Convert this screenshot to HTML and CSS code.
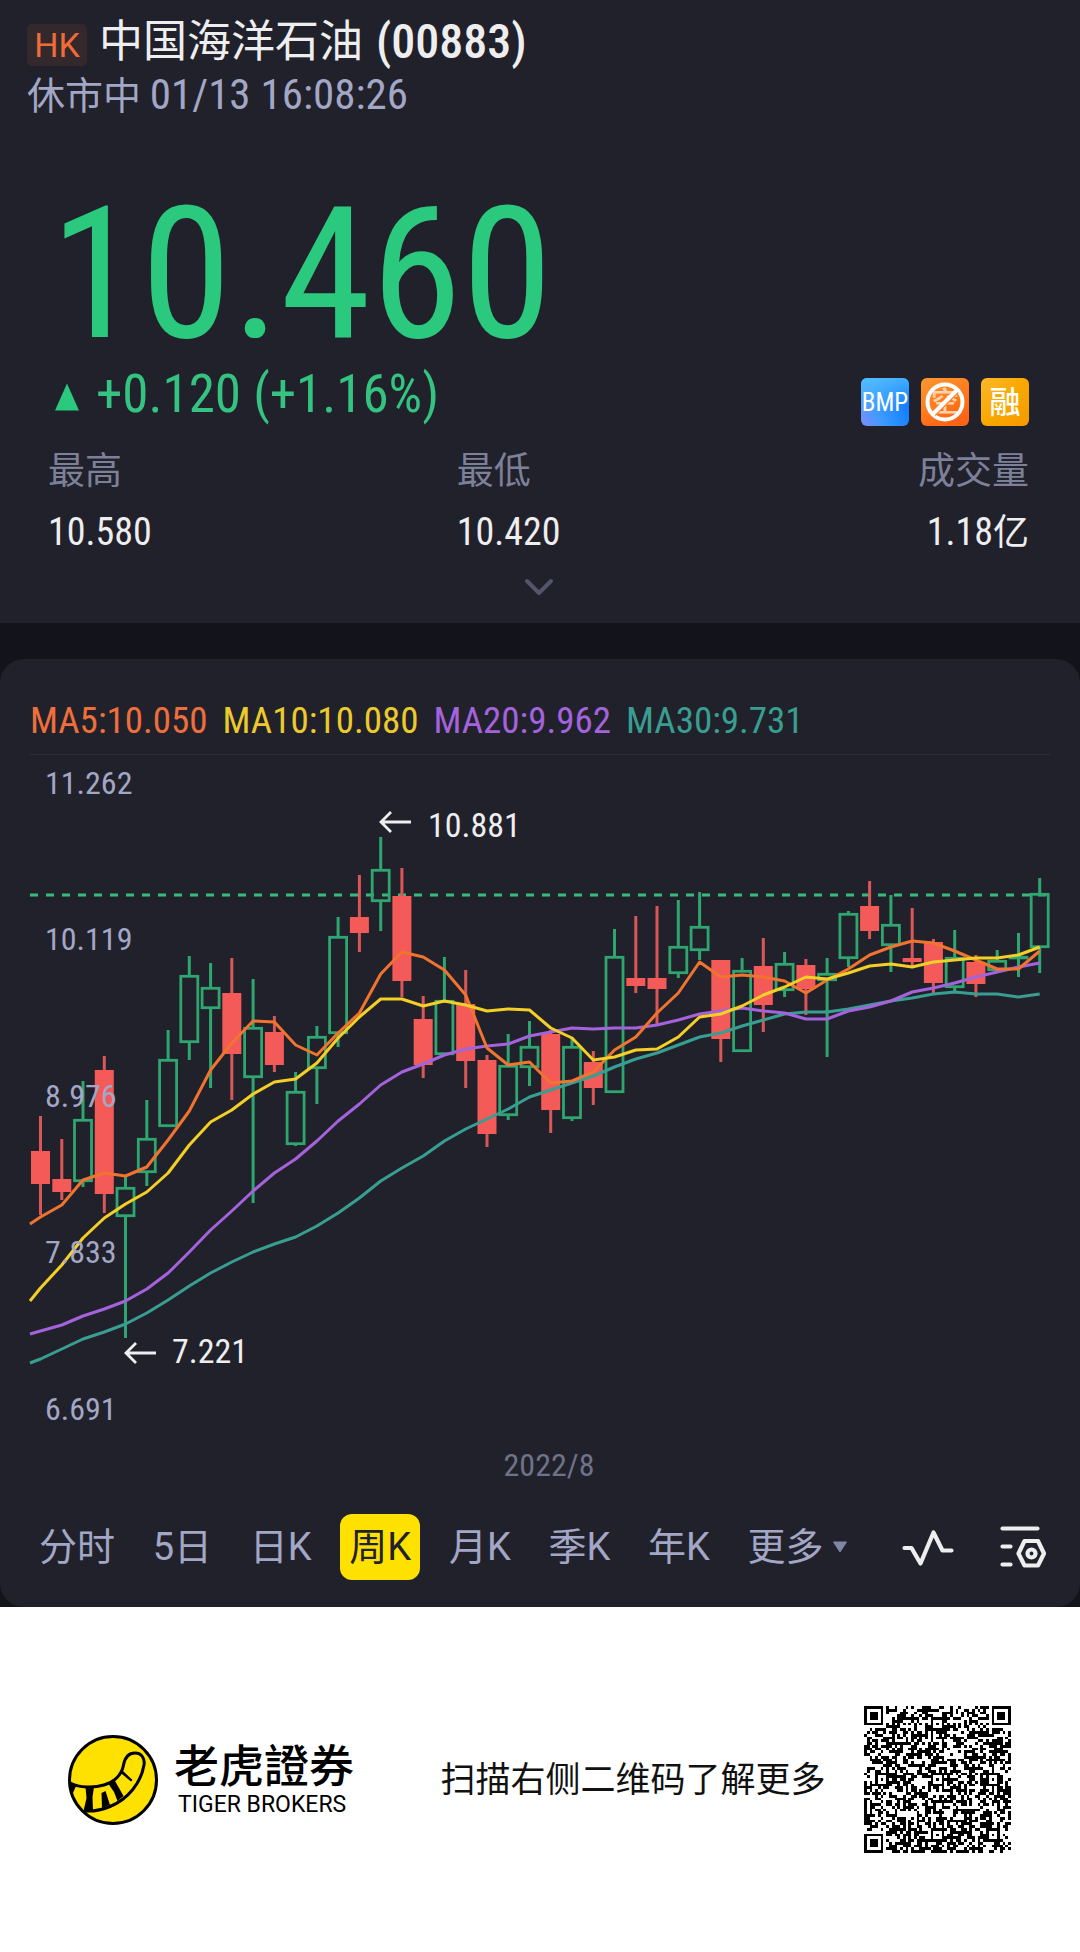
FILE: index.html
```html
<!DOCTYPE html>
<html lang="zh-CN">
<head>
<meta charset="utf-8">
<meta name="viewport" content="width=device-width, initial-scale=1">
<title>中国海洋石油 (00883)</title>
<link rel="stylesheet" href="styles.css">
</head>
<body>
<main class="app">
  <section class="quote">
    <header class="head">
      <h1 class="title"><span class="market">HK</span><span class="name">中国海洋石油</span><span class="code">(00883)</span></h1>
      <p class="status">休市中 <span class="num">01/13 16:08:26</span></p>
    </header>
    <div class="price">10.460</div>
    <div class="change-row">
      <div class="change">
        <svg class="up" viewBox="0 0 26 28" aria-hidden="true"><path d="M13 0.5 25 27.500H1Z" fill="#2ac97e"/></svg>
        <span>+0.120 (+1.16%)</span>
      </div>
      <ul class="badges">
        <li>
          <svg viewBox="0 0 48 48">
            <defs>
              <linearGradient id="blue" x1="0" y1="1" x2="1" y2="0.600"><stop offset="0" stop-color="#7d8dfa"/><stop offset="0.400" stop-color="#3f9bff"/><stop offset="1" stop-color="#0f7dff"/></linearGradient>
              <linearGradient id="sky" x1="0.300" y1="0" x2="0.500" y2="1"><stop offset="0" stop-color="#4fbaff"/><stop offset="0.700" stop-color="#4fbaff" stop-opacity="0"/></linearGradient>
            </defs>
            <rect width="48" height="48" rx="6" fill="url(#blue)"/>
            <rect width="48" height="48" rx="6" fill="url(#sky)"/>
            <text class="bmp" x="24" y="33" text-anchor="middle">BMP</text>
          </svg>
        </li>
        <li>
          <svg viewBox="0 0 48 48">
            <defs><linearGradient id="orange" x1="0" y1="0" x2="0.500" y2="1"><stop offset="0" stop-color="#ff9a2e"/><stop offset="1" stop-color="#ff6414"/></linearGradient></defs>
            <rect width="48" height="48" rx="6" fill="url(#orange)"/>
            <text class="short" x="24" y="34" text-anchor="middle">空</text>
            <circle cx="24" cy="24" r="17.500" fill="none" stroke="#fff" stroke-width="4"/>
            <path d="M13.500 37 36.500 14" stroke="#ff7a1f" stroke-width="3"/>
            <path d="M11.500 36.500 36.500 11.500" stroke="#fff" stroke-width="4"/>
          </svg>
        </li>
        <li>
          <svg viewBox="0 0 48 48">
            <defs><linearGradient id="gold" x1="0" y1="0" x2="1" y2="1"><stop offset="0" stop-color="#fdb82a"/><stop offset="0.500" stop-color="#f9a800"/><stop offset="1" stop-color="#f59a00"/></linearGradient></defs>
            <rect width="48" height="48" rx="6" fill="url(#gold)"/>
            <text class="margin" x="24" y="35" text-anchor="middle">融</text>
          </svg>
        </li>
      </ul>
    </div>
    <dl class="stats">
      <div><dt>最高</dt><dd>10.580</dd></div>
      <div><dt>最低</dt><dd>10.420</dd></div>
      <div class="last"><dt>成交量</dt><dd>1.18<span class="unit">亿</span></dd></div>
    </dl>
    <button class="expand" type="button" aria-label="展开">
      <svg viewBox="0 0 30 18"><path d="M3 3 15 15 27 3" fill="none" stroke="#53566a" stroke-width="4" stroke-linecap="round" stroke-linejoin="round"/></svg>
    </button>
  </section>

  <section class="card">
    <div class="averages">
      <span class="ma5">MA5:10.050</span>
      <span class="ma10">MA10:10.080</span>
      <span class="ma20">MA20:9.962</span>
      <span class="ma30">MA30:9.731</span>
    </div>
    <svg class="chart" id="chart" viewBox="0 755 1080 735" role="img" aria-label="周K"></svg>
    <nav class="tabs">
      <button type="button">分时</button>
      <button type="button">5日</button>
      <button type="button">日K</button>
      <button type="button" class="active">周K</button>
      <button type="button">月K</button>
      <button type="button">季K</button>
      <button type="button">年K</button>
      <button type="button" class="more">更多<svg viewBox="0 0 16 12" aria-hidden="true"><path d="M1.500 1H14.500L8 11Z" fill="#8286a4" stroke="#8286a4" stroke-linejoin="round"/></svg></button>
      <button type="button" class="tool" aria-label="指标">
        <svg class="wave" viewBox="0 0 52 38"><path d="M2.500 20H9.500L18.500 35.500 31.500 4.500 40.500 22.500H49.500" fill="none" stroke="#eeeeef" stroke-width="4.200" stroke-linecap="round" stroke-linejoin="round"/></svg>
      </button>
      <button type="button" class="tool" aria-label="设置">
        <svg class="setup" viewBox="0 0 46 44"><g fill="none" stroke="#eeeeef" stroke-width="4.200" stroke-linecap="round" stroke-linejoin="round"><path d="M2.500 3.500H37.500M2.500 21.500H10.500M2.500 39.500H10.500M24.500 16H38L44 28.500 38 40.500H24.500L18.500 28.500Z"/><circle cx="31.500" cy="28.500" r="4"/></g></svg>
      </button>
    </nav>
  </section>
</main>

<footer class="promo">
  <div class="brand">
    <svg class="logo" viewBox="0 0 90 90" aria-hidden="true">
      <circle cx="45" cy="45" r="43.500" fill="#ffe100"/>
      <path d="M2 48C12 53 26 53 36 50 47 47 54 39 55.500 30 57 22 61 18 67 18 74 18 77 24 76 30 73 48 60 64 42 71.500 34 75 26 76.500 17 76" fill="none" stroke="#000" stroke-width="3"/>
      <path d="M1.500 47 8.500 50 4 60ZM17.500 52H26L24.500 62 25 75 15.500 76 18.500 63ZM33.500 58 37.500 56 42 70 34 73ZM40.500 49 47 46 51 53 55.500 61 49.500 66 46 57ZM51.500 37 54.500 35.500 64.500 45 63 46.500Z" fill="#000"/>
      <circle cx="45" cy="45" r="43.500" fill="none" stroke="#000" stroke-width="3"/>
    </svg>
    <div class="brand-text"><strong>老虎證券</strong><span>TIGER BROKERS</span></div>
  </div>
  <p class="hint">扫描右侧二维码了解更多</p>
  <svg class="qr" id="qr" viewBox="0 0 53 53" role="img" aria-label="二维码"></svg>
</footer>
<script src="script.js"></script>
</body>
</html>
```

FILE: styles.css
```css
* { box-sizing: border-box; }

body {
  margin: 0;
  background: #fff;
  color: #eeeeef;
  font-family: "Roboto Condensed", "Noto Sans CJK SC", sans-serif;
}

h1, p, dl, dt, dd, ul { margin: 0; padding: 0; font-weight: 400; }
ul { list-style: none; }
svg { display: block; }
button { margin: 0; padding: 0; border: 0; background: none; color: inherit; font: inherit; }

.app { background: #13131c; }

/* Quote summary */
.quote {
  padding: 18px 51px 27px 48px;
  background: #21212b;
}
.head { margin-left: -21px; }
.title { display: flex; align-items: center; height: 48px; font-size: 44px; line-height: 48px; white-space: nowrap; }
.market {
  width: 60px;
  height: 42px;
  margin: 6px 12px 0 0;
  border-radius: 5px;
  background: #33282c;
  color: #ee6c36;
  font-family: Roboto, sans-serif;
  font-size: 34px;
  line-height: 42px;
  text-align: center;
}
.code { margin-left: 13px; font-size: 48px; font-weight: 500; }
.status { height: 40px; margin-top: 8px; color: #a3a7c6; font-size: 38px; line-height: 40px; }
.num { font-size: 43px; }
.price { margin: 70px 0 0 2px; color: #2ac97e; font-size: 184px; font-weight: 400; line-height: 180px; }

.change-row { display: flex; justify-content: space-between; align-items: flex-end; height: 56px; margin-top: 6px; }
.change { display: flex; align-self: flex-start; align-items: center; gap: 16px; margin-left: 6px; color: #34c380; font-size: 53px; font-weight: 400; line-height: 48px; }
.up { width: 26px; height: 28px; margin-top: 6px; }
.badges { display: flex; gap: 12px; }
.badges svg { width: 48px; height: 48px; }
.badges text { fill: #fff; font-family: "Noto Sans CJK SC", sans-serif; }
.badges .bmp { font-family: "Roboto Condensed", sans-serif; font-size: 25px; font-weight: 400; }
.badges .short { fill: #ffd2ae; font-size: 28px; font-weight: 500; }
.badges .margin { font-size: 31px; font-weight: 500; }

.stats { display: grid; grid-template-columns: 5fr 4fr 3fr; margin-top: 22px; }
.stats dt { height: 48px; color: #7d8099; font-size: 37px; line-height: 48px; }
.stats dd { height: 48px; margin-top: 12px; font-size: 38px; line-height: 48px; }
.stats .last { text-align: right; }
.unit { font-size: 36px; }
.expand { display: block; margin: 22px auto 0; }
.expand svg { width: 30px; height: 18px; }

/* Chart card */
.card {
  margin-top: 36px;
  padding: 36px 0 27px;
  border-radius: 24px;
  background: #21212b;
}
.averages {
  display: flex;
  gap: 15px;
  height: 60px;
  margin: 0 30px;
  border-bottom: 1px solid #2d2e39;
  font-size: 37px;
  line-height: 52px;
  white-space: nowrap;
}
.ma5 { color: #ee6f3b; }
.ma10 { color: #ecca2e; }
.ma20 { color: #a463dc; }
.ma30 { color: #399e92; }
.chart { width: 100%; height: auto; }
.axis { fill: #a3a7c6; font-size: 32px; }
.date { fill: #6f7289; font-size: 32px; }
.mark { fill: #eeeeef; font-size: 34px; }

.tabs { display: flex; justify-content: space-between; margin-top: 24px; padding: 0 34px 0 30px; font-family: Roboto, "Noto Sans CJK SC", sans-serif; }
.tabs button { height: 66px; padding: 0 9px; border-radius: 12px; color: #a3a7c6; font-size: 38px; line-height: 66px; white-space: nowrap; }
.tabs .active { background: #ffe100; color: #21212b; }
.tabs .more { display: flex; align-items: center; gap: 8px; }
.more svg { width: 16px; height: 12px; }
.tabs .tool { padding: 0 0 0 26px; }
.wave { width: 52px; height: 38px; }
.setup { width: 46px; height: 44px; }

/* Footer */
.promo {
  display: flex;
  align-items: center;
  justify-content: space-between;
  padding: 99px 69px 99px 68px;
  background: #fff;
  color: #000;
}
.brand { display: flex; align-items: center; gap: 16px; }
.logo { width: 90px; height: 90px; }
.brand-text { display: flex; flex-direction: column; }
.brand-text strong { font-family: "Noto Sans CJK TC", sans-serif; font-size: 45px; font-weight: 500; line-height: 50px; }
.brand-text span { padding-left: 4px; font-family: Roboto, sans-serif; font-size: 23px; line-height: 32px; }
.hint { margin: 2px 0 0 48px; color: #111; font-size: 35px; line-height: 48px; }
.qr { width: 147px; height: 147px; }
```

FILE: script.js
```js
// Weekly candles: [rising, high, body top, body bottom, low] on the chart's vertical scale.
const candles = [
  [0,1116,1151,1184,1215],[0,1139,1179,1192,1200],[1,1081,1119,1182,1187],[0,1056,1070,1194,1213],
  [1,1176,1187,1217,1338],[1,1100,1138,1173,1186],[1,1030,1059,1127,1127],[1,956,975,1043,1060],
  [1,963,987,1009,1088],[0,958,993,1054,1100],[1,979,1027,1078,1203],[0,1016,1032,1065,1072],
  [1,1072,1091,1145,1146],[1,1026,1036,1069,1104],[1,917,936,1034,1047],[0,875,917,933,952],
  [1,837,869,902,931],[0,868,896,981,997],[0,996,1019,1065,1078],[1,957,1000,1055,1055],
  [0,970,1004,1061,1088],[0,1055,1060,1134,1147],[1,1034,1065,1116,1120],[1,1021,1046,1068,1086],
  [0,1030,1034,1110,1133],[1,1037,1046,1119,1121],[0,1051,1062,1088,1105],[1,929,956,1093,1093],
  [0,916,978,986,993],[0,906,978,989,1024],[1,900,946,974,978],[1,892,926,951,960],
  [0,960,960,1039,1062],[1,958,970,1052,1052],[0,938,966,1005,1032],[1,952,963,991,997],
  [0,959,965,989,1015],[1,958,973,981,1057],[1,911,913,959,967],[0,881,906,931,939],
  [1,895,924,946,972],[0,908,958,962,967],[0,939,942,983,993],[1,930,957,988,992],
  [0,955,962,984,997],[1,950,960,971,972],[1,933,956,959,977],[1,878,893,948,973]
];

// Moving averages; the first value of each lies on the chart's left edge.
const averages = [
  ["#399e92", [1363,1359,1349,1339,1332,1324,1313,1300,1286,1273,1262,1252,1244,1237,1226,1213,1198,1181,1168,1156,1141,1129,1119,1109,1097,1090,1083,1076,1067,1059,1053,1045,1037,1033,1026,1020,1014,1012,1012,1009,1005,1001,998,994,992,994,994,997,994]],
  ["#a463dc", [1334,1331,1325,1316,1309,1301,1289,1273,1252,1230,1211,1191,1173,1159,1141,1121,1104,1085,1072,1064,1055,1049,1046,1044,1036,1032,1028,1029,1028,1028,1025,1020,1014,1011,1008,1011,1013,1019,1019,1011,1007,1001,992,988,983,977,972,967,963]],
  ["#f0742f", [1224,1217,1205,1180,1173,1176,1167,1140,1111,1070,1043,1021,1022,1045,1055,1033,1013,974,952,957,970,995,1048,1065,1062,1083,1081,1072,1050,1037,1013,993,962,977,975,977,981,993,980,969,955,947,941,943,951,960,969,969,951]],
  ["#f4cf26", [1301,1288,1265,1238,1218,1204,1192,1173,1145,1122,1110,1094,1082,1079,1063,1038,1017,999,999,1006,1001,1005,1011,1009,1010,1028,1038,1060,1057,1050,1049,1037,1017,1014,1006,995,987,977,979,973,966,964,967,962,960,958,958,955,947]]
];

const FIRST = 40.5;
const STEP = 21.26;
const HALF = 9.5;
const UP = "#2fa56f";
const DOWN = "#f35a58";
const centre = i => FIRST + i * STEP;

const parts = [];
parts.push(`<path d="M30 895H1050" stroke="#38b87c" stroke-width="3" stroke-dasharray="8 8"/>`);

candles.forEach(([up, high, top, bottom, low], i) => {
  const x = centre(i).toFixed(1);
  const left = (centre(i) - HALF).toFixed(1);
  if (up) {
    const height = Math.max(bottom - top - 2.6, 0.6);
    parts.push(`<path d="M${x} ${high}V${top}M${x} ${bottom}V${low}" stroke="${UP}" stroke-width="3"/>`);
    parts.push(`<rect x="${(centre(i) - HALF + 1).toFixed(1)}" y="${top + 1.3}" width="17" height="${height}" fill="none" stroke="${UP}" stroke-width="2.8"/>`);
  } else {
    parts.push(`<path d="M${x} ${high}V${low}" stroke="#db5757" stroke-width="3"/>`);
    parts.push(`<rect x="${left}" y="${top}" width="19" height="${bottom - top}" fill="${DOWN}"/>`);
  }
});

averages.forEach(([color, values]) => {
  const points = values.map((v, i) => `${i ? centre(i - 1).toFixed(1) : 30},${v}`).join(" ");
  parts.push(`<polyline points="${points}" fill="none" stroke="${color}" stroke-width="3" stroke-linejoin="round"/>`);
});

[["11.262", 794], ["10.119", 950], ["8.976", 1107], ["7.833", 1263], ["6.691", 1420]].forEach(([label, y]) => {
  parts.push(`<text class="axis" x="45" y="${y}">${label}</text>`);
});

[["7.221", 126, 1353, 172], ["10.881", 381, 822, 428]].forEach(([label, x, y, tx]) => {
  parts.push(`<path d="M${x + 30} ${y}H${x}M${x + 10} ${y - 10}L${x} ${y}L${x + 10} ${y + 10}" fill="none" stroke="#eeeeef" stroke-width="2.8"/>`);
  parts.push(`<text class="mark" x="${tx}" y="${y + (tx > 400 ? 15 : 10)}">${label}</text>`);
});
parts.push(`<text class="date" x="549" y="1476" text-anchor="middle">2022/8</text>`);
document.getElementById("chart").innerHTML = parts.join("");

// QR symbol, 53 modules a side.
const SIZE = 53;
const finders = [[0, 0], [SIZE - 7, 0], [0, SIZE - 7]];
const aligns = [[26, 6], [6, 26], [26, 26], [46, 26], [26, 46], [46, 46]];
let seed = 883;
const random = () => {
  seed = (seed * 1103515245 + 12345) % 2147483648;
  return seed / 2147483648;
};
const isDark = (x, y) => {
  const noise = random() < 0.53;
  for (const [fx, fy] of finders) {
    const ring = Math.max(Math.abs(x - fx - 3), Math.abs(y - fy - 3));
    if (ring <= 4) return ring === 3 || ring <= 1;
  }
  for (const [ax, ay] of aligns) {
    const ring = Math.max(Math.abs(x - ax), Math.abs(y - ay));
    if (ring <= 2) return ring !== 1;
  }
  if (x === 6 || y === 6) return (x + y) % 2 === 0;
  return noise;
};
let modules = "";
for (let y = 0; y < SIZE; y++) {
  for (let x = 0; x < SIZE; x++) {
    if (isDark(x, y)) modules += `M${x} ${y}h1v1h-1z`;
  }
}
document.getElementById("qr").innerHTML = `<path d="${modules}" shape-rendering="crispEdges"/>`;
```
